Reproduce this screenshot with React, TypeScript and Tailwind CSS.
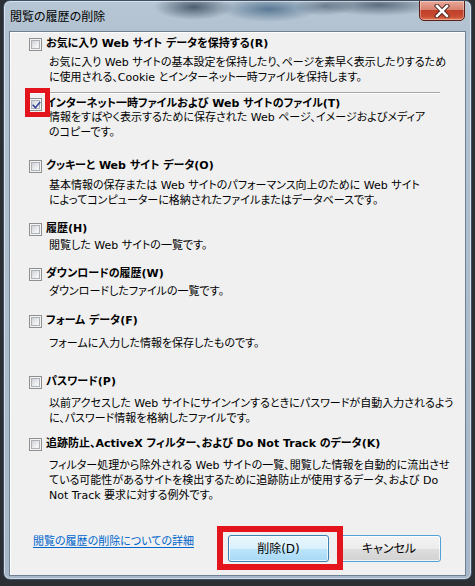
import React from "react";

function Checkbox({ checked = false }: { checked?: boolean }) {
  return (
    <div className="w-[13px] h-[13px] shrink-0 border border-[#8e8f8f] bg-[#f4f4f4] p-[1px]">
      <div className="relative w-full h-full border border-[#aeb1b6] bg-[linear-gradient(135deg,#cfd2d7,#eceef0_60%,#f8f8f8)]">
        {checked && (
          <svg className="absolute left-[-1px] top-[-1px]" width="11" height="11" viewBox="0 0 11 11">
            <path d="M2.2 5.4 L4.4 7.8 L8.6 2.6" fill="none" stroke="#3a4a9a" strokeWidth="1.7" strokeLinecap="square" />
          </svg>
        )}
      </div>
    </div>
  );
}

const F = "font-['DejaVu_Sans','Noto_Sans_CJK_JP',sans-serif] [font-feature-settings:'palt']";

export default function App() {
  return (
    <div className={`w-[475px] h-[586px] bg-[#2c3035] overflow-hidden ${F} text-[11px] text-black`}>
      <div className="relative ml-[3px] w-[469px] h-[580px] rounded-[7px] border border-[#3f5064] overflow-hidden bg-[radial-gradient(ellipse_40px_13px_at_190px_6px,rgba(30,50,70,0.7),transparent),radial-gradient(ellipse_50px_13px_at_265px_8px,rgba(40,80,115,0.65),transparent),radial-gradient(ellipse_30px_10px_at_320px_5px,rgba(40,60,80,0.5),transparent),radial-gradient(ellipse_60px_11px_at_375px_4px,rgba(30,50,70,0.6),transparent),linear-gradient(180deg,#b7c6d4,#b2c2d1_30px,#a5b7c8)] shadow-[inset_0_0_0_1px_rgba(255,255,255,0.5)]">
        {/* title bar */}
        <div className="h-[30px] flex items-center pl-[6px] pt-[2px]">
          <span className="text-[12px] leading-[16px] text-black">閲覧の履歴の削除</span>
        </div>
        {/* close button */}
        <div className="absolute left-[415px] top-[-1px] w-[46px] h-[21px] rounded-b-[5px] border border-[#5a1f18] bg-[linear-gradient(180deg,#e9a899,#d88270_45%,#c0402a_50%,#c84a30_80%,#e07a55)] shadow-[inset_0_0_0_1px_rgba(255,255,255,0.35)] flex items-center justify-center">
          <svg width="16" height="14" viewBox="0 0 16 14">
            <path d="M3 2 L13 12 M13 2 L3 12" stroke="#3a1a14" strokeWidth="4.4" strokeLinecap="square" />
            <path d="M3 2 L13 12 M13 2 L3 12" stroke="#ffffff" strokeWidth="2.6" strokeLinecap="square" />
          </svg>
        </div>
        {/* client area */}
        <div className="ml-[5px] w-[457px] h-[545px] border border-[#6f8092] bg-[#f0f0f0] shadow-[inset_1px_1px_0_#ffffff]">
          <div className="pl-[19px] pt-[4px] whitespace-nowrap">
            {/* Row 1 */}
            <div className="flex items-center h-[16px]">
              <Checkbox />
              <span className="ml-[4px] font-bold">お気に入り Web サイト データを保持する(R)</span>
            </div>
            <div className="ml-[20px] mt-[3px] leading-[15px]">
              お気に入り Web サイトの基本設定を保持したり、ページを素早く表示したりするため
              <br />
              に使用される、Cookie とインターネット一時ファイルを保持します。
            </div>
            {/* separator */}
            <div className="mt-[7px] w-[411px] h-[2px] border-t border-[#a7a7a7] bg-white" />
            {/* Row 2 */}
            <div className="flex items-center h-[16px] mt-[2px]">
              <div className="relative">
                <Checkbox checked />
                <div className="absolute left-[-4px] top-[-10px] w-[25px] h-[29px] border-[5px] border-[#e3141c]" />
              </div>
              <span className="ml-[4px] font-bold">インターネット一時ファイルおよび Web サイトのファイル(T)</span>
            </div>
            <div className="ml-[20px] mt-[-2px] leading-[15px]">
              情報をすばやく表示するために保存された Web ページ、イメージおよびメディア
              <br />
              のコピーです。
            </div>
            {/* Row 3 */}
            <div className="flex items-center h-[16px] mt-[18px]">
              <Checkbox />
              <span className="ml-[4px] font-bold">クッキーと Web サイト データ(O)</span>
            </div>
            <div className="ml-[20px] mt-[4px] leading-[15px]">
              基本情報の保存または Web サイトのパフォーマンス向上のために Web サイト
              <br />
              によってコンピューターに格納されたファイルまたはデータベースです。
            </div>
            {/* Row 4 */}
            <div className="flex items-center h-[16px] mt-[13px]">
              <Checkbox />
              <span className="ml-[4px] font-bold">履歴(H)</span>
            </div>
            <div className="ml-[20px] mt-[1px] leading-[15px]">閲覧した Web サイトの一覧です。</div>
            {/* Row 5 */}
            <div className="flex items-center h-[16px] mt-[13px]">
              <Checkbox />
              <span className="ml-[4px] font-bold">ダウンロードの履歴(W)</span>
            </div>
            <div className="ml-[20px] mt-[2px] leading-[15px]">ダウンロードしたファイルの一覧です。</div>
            {/* Row 6 */}
            <div className="flex items-center h-[16px] mt-[14px]">
              <Checkbox />
              <span className="ml-[4px] font-bold">フォーム データ(F)</span>
            </div>
            <div className="ml-[20px] mt-[7px] leading-[15px]">フォームに入力した情報を保存したものです。</div>
            {/* Row 7 */}
            <div className="flex items-center h-[16px] mt-[23px]">
              <Checkbox />
              <span className="ml-[4px] font-bold">パスワード(P)</span>
            </div>
            <div className="ml-[20px] mt-[6px] leading-[15px]">
              以前アクセスした Web サイトにサインインするときにパスワードが自動入力されるよう
              <br />
              に、パスワード情報を格納したファイルです。
            </div>
            {/* Row 8 */}
            <div className="flex items-center h-[16px] mt-[10px]">
              <Checkbox />
              <span className="ml-[4px] font-bold">追跡防止、ActiveX フィルター、および Do Not Track のデータ(K)</span>
            </div>
            <div className="ml-[20px] mt-[6px] leading-[15px]">
              フィルター処理から除外される Web サイトの一覧、閲覧した情報を自動的に流出させ
              <br />
              ている可能性があるサイトを検出するために追跡防止が使用するデータ、および Do
              <br />
              Not Track 要求に対する例外です。
            </div>
            {/* Footer */}
            <div className="mt-[32px] flex items-start pl-[4px] pr-[24px]">
              <a className="mt-[-1px] leading-[16px] text-[#0066cc] underline underline-offset-[2px]" href="#">
                閲覧の履歴の削除についての詳細
              </a>
              <div className="ml-auto flex gap-[8px]">
                <div className="relative">
                  <button className="w-[101px] h-[27px] rounded-[3px] border border-[#3c7fb1] bg-[linear-gradient(180deg,#eaf6fd,#d9f0fc_50%,#bee6fd_50%,#a7d9f5)] shadow-[inset_0_0_0_1px_rgba(255,255,255,0.7)] text-[12px] flex items-center justify-center">
                    削除(D)
                  </button>
                  <div className="absolute left-[-11px] top-[-9px] w-[126px] h-[44px] border-[6px] border-[#e3141c]" />
                </div>
                <button className="w-[104px] h-[27px] rounded-[3px] border border-[#4fa3d6] bg-[linear-gradient(180deg,#f4f4f4,#ececec_50%,#dedede_50%,#d2d2d2)] shadow-[inset_0_0_0_1px_rgba(255,255,255,0.7)] text-[12px] flex items-center justify-center">
                  キャンセル
                </button>
              </div>
            </div>
          </div>
        </div>
      </div>
    </div>
  );
}
